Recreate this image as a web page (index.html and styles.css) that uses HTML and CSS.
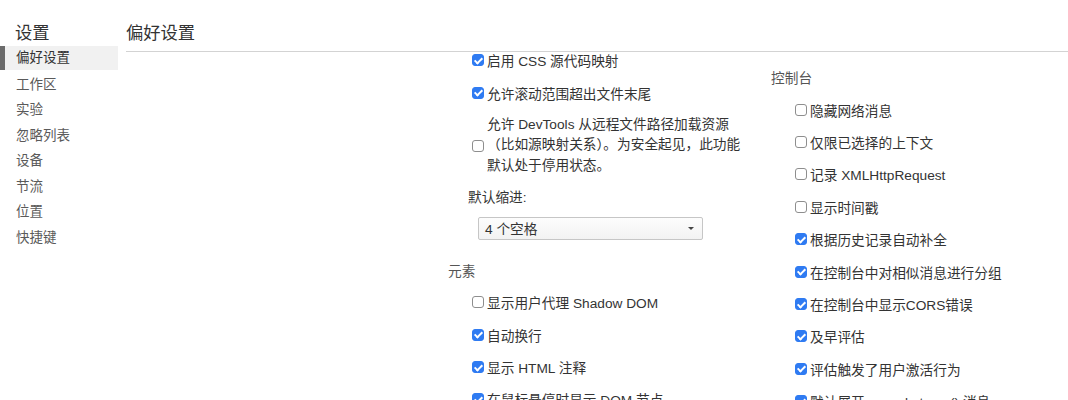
FILE: index.html
```html
<!DOCTYPE html>
<html lang="zh-CN">
<head>
    <meta charset="UTF-8">
    <meta name="viewport" content="width=device-width, initial-scale=1">
    <title>设置</title>
    <link rel="stylesheet" href="styles.css">
</head>
<body>
    <div class="app">
        <aside class="sidebar">
            <div class="sidebar-title">设置</div>
            <ul class="nav">
                <li class="active">偏好设置</li>
                <li>工作区</li>
                <li>实验</li>
                <li>忽略列表</li>
                <li>设备</li>
                <li>节流</li>
                <li>位置</li>
                <li>快捷键</li>
            </ul>
        </aside>

        <main class="panel">
            <div class="panel-title">偏好设置</div>
            <div class="panel-body">
                <!-- left column (scrolled a little) -->
                <div class="column col-left">
                    <div class="row"><span class="box on"></span>启用 CSS 源代码映射</div>
                    <div class="row"><span class="box on"></span>允许滚动范围超出文件末尾</div>
                    <div class="row row-multi">
                        <span class="box"></span>
                        <span class="multi-text">允许 DevTools 从远程文件路径加载资源<br>（比如源映射关系）。为安全起见，此功能<br>默认处于停用状态。</span>
                    </div>
                    <div class="field-label">默认缩进:</div>
                    <div class="select-wrap">
                        <div class="select">
                            <span>4 个空格</span>
                            <svg class="arrow" width="6" height="3" viewBox="0 0 6 3"><path d="M0 0h6L3 3z" fill="#444"/></svg>
                        </div>
                    </div>

                    <div class="section-title">元素</div>
                    <div class="row"><span class="box"></span>显示用户代理 Shadow DOM</div>
                    <div class="row"><span class="box on"></span>自动换行</div>
                    <div class="row"><span class="box on"></span>显示 HTML 注释</div>
                    <div class="row"><span class="box on"></span>在鼠标悬停时显示 DOM 节点</div>
                </div>

                <div class="column col-right">
                    <div class="section-title">控制台</div>
                    <div class="row"><span class="box"></span>隐藏网络消息</div>
                    <div class="row"><span class="box"></span>仅限已选择的上下文</div>
                    <div class="row"><span class="box"></span>记录 XMLHttpRequest</div>
                    <div class="row"><span class="box"></span>显示时间戳</div>
                    <div class="row"><span class="box on"></span>根据历史记录自动补全</div>
                    <div class="row"><span class="box on"></span>在控制台中对相似消息进行分组</div>
                    <div class="row"><span class="box on"></span>在控制台中显示CORS错误</div>
                    <div class="row"><span class="box on"></span>及早评估</div>
                    <div class="row"><span class="box on"></span>评估触发了用户激活行为</div>
                    <div class="row"><span class="box on"></span>默认展开 console.trace() 消息</div>
                </div>
            </div>
        </main>
    </div>
</body>
</html>
```

FILE: styles.css
```css
html, body {
    margin: 0;
    height: 100%;
    overflow: hidden;
    background: #fff;
}
body {
    font-family: "Liberation Sans", "Noto Sans CJK SC", sans-serif;
    color: #333;
}
.app {
    display: flex;
    height: 400px;
}

/* sidebar */
.sidebar {
    width: 118px;
    flex: none;
}
.sidebar-title {
    font-size: 17.3px;
    line-height: 24px;
    padding: 21px 0 0 15px;
    color: #333;
}
.nav {
    list-style: none;
    margin: 1px 0 0;
    padding: 0;
}
.nav li {
    height: 25.5px;
    line-height: 25.5px;
    padding-left: 16px;
    font-size: 13.5px;
    color: #5a5a5a;
}
.nav li.active {
    background: #f1f1f1;
    color: #333;
    border-left: 5px solid #6b6b6b;
    padding-left: 11px;
    height: 24px;
    line-height: 24px;
    margin-bottom: 1.5px;
}

/* main panel */
.panel {
    flex: 1;
    margin-left: 8px;
    min-width: 0;
}
.panel-title {
    font-size: 17.3px;
    line-height: 24px;
    padding: 21px 0 6px;
    border-bottom: 1px solid #d3d3d3;
}
.panel-body {
    display: flex;
    padding-left: 322px;
    height: 348px;
    overflow: hidden;
    font-size: 13.7px;
}
.column {
    width: 323px;
    flex: none;
}
.col-left {
    margin-top: -8px;
}
.col-right {
    padding-top: 11px;
}

.section-title {
    height: 30.4px;
    line-height: 32.4px;
    color: #555;
}
.row {
    display: flex;
    align-items: center;
    gap: 3px;
    height: 32.4px;
    padding-left: 24px;
    white-space: nowrap;
}
.row-multi {
    height: auto;
    padding-top: 6px;
    padding-bottom: 6px;
}
.multi-text {
    line-height: 20.5px;
}

/* checkbox */
.box {
    position: relative;
    flex: none;
    box-sizing: border-box;
    width: 12px;
    height: 12px;
    border: 1px solid #8e8e8e;
    border-radius: 3px;
    background: #fff;
}
.box.on {
    background: #2f7bf2;
    border-color: #2f7bf2;
}
.box.on::after {
    content: "";
    position: absolute;
    left: 3.2px;
    top: 0.6px;
    width: 3px;
    height: 6px;
    border: solid #fff;
    border-width: 0 2px 2px 0;
    transform: rotate(45deg);
}

/* indent select */
.field-label {
    height: 32.4px;
    line-height: 32.4px;
    padding-left: 20px;
}
.select-wrap {
    padding: 2px 0 16px 30px;
}
.select {
    display: flex;
    align-items: center;
    box-sizing: border-box;
    width: 225px;
    height: 23px;
    padding: 0 8px 0 6px;
    border: 1px solid #c6c6c6;
    border-radius: 2px;
    background: linear-gradient(#fdfdfd, #f2f2f2);
}
.select .arrow {
    margin-left: auto;
}
```
